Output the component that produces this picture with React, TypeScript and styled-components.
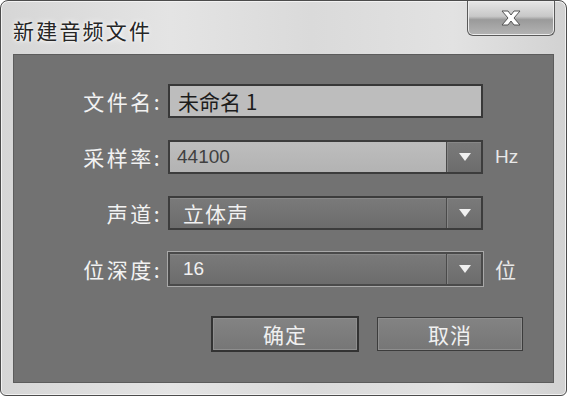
import styled, { createGlobalStyle, css } from "styled-components";

const GlobalStyle = createGlobalStyle`
  html, body {
    margin: 0;
    padding: 0;
    background: #ffffff;
  }
  * {
    box-sizing: border-box;
  }
`;

const cjk = `"Noto Sans CJK SC", "Noto Sans", sans-serif`;
const latin = `"Liberation Sans", "Noto Sans CJK SC", sans-serif`;

const Window = styled.div`
  width: 567px;
  height: 396px;
  display: flex;
  flex-direction: column;
  padding: 0 12px 12px 12px;
  border: 1px solid #4c4c4c;
  border-radius: 8px 8px 6px 6px;
  background: linear-gradient(90deg, #d6d6d6 0%, #e4e4e4 30%, #dadada 55%, #e2e2e2 80%, #d2d2d2 100%);
  box-shadow: inset 0 0 0 1px #f2f2f2;
`;

const TitleBar = styled.div`
  height: 53px;
  display: flex;
  justify-content: space-between;
  align-items: flex-start;
`;

const Title = styled.div`
  margin-top: 14px;
  font-family: ${cjk};
  font-size: 21px;
  letter-spacing: 2.2px;
  color: #262626;
  text-shadow: 0 0 6px #ffffff, 0 0 3px #ffffff;
`;

const CloseButton = styled.div`
  width: 88px;
  height: 35px;
  margin-right: -1px;
  display: flex;
  align-items: center;
  justify-content: center;
  border: 1px solid #5a5a5a;
  border-top: none;
  border-radius: 0 0 6px 6px;
  background: linear-gradient(180deg, #e6e6e6 0%, #c8c8c8 45%, #9a9a9a 55%, #b4b4b4 100%);
  box-shadow: inset 0 0 0 1px #ececec;
`;

const Client = styled.div`
  flex: 1;
  background: #727272;
  border: 1px solid #5c5c5c;
  display: grid;
  grid-template-columns: 148px 315px auto;
  grid-auto-rows: 34px;
  column-gap: 6px;
  row-gap: 22px;
  align-items: center;
  padding-top: 29px;
`;

const Label = styled.div`
  justify-self: end;
  font-family: ${cjk};
  font-size: 21px;
  letter-spacing: 2.5px;
  color: #f2f2f2;
  white-space: nowrap;
`;

const TextInput = styled.div`
  height: 34px;
  display: flex;
  align-items: center;
  padding-left: 8px;
  border: 2px solid #383838;
  background: #bdbdbd;
  font-family: ${cjk};
  font-size: 21px;
  color: #1c1c1c;
`;

const Select = styled.div<{ $focused?: boolean }>`
  height: 34px;
  display: flex;
  border: 2px solid #3c3c3c;
  background: linear-gradient(180deg, #7a7a7a 0%, #6c6c6c 100%);
  box-shadow: inset 0 1px 0 #888888;
  ${(p) =>
    p.$focused &&
    css`
      border-color: #4a4a4a;
      box-shadow: 0 0 0 1px #a8a8a8, inset 0 1px 0 #888888;
    `}
`;

const SelectValue = styled.div<{ $light?: boolean }>`
  flex: 1;
  display: flex;
  align-items: center;
  padding-left: 13px;
  font-family: ${latin};
  font-size: 19px;
  color: #f0f0f0;
  border-right: 1px solid #4a4a4a;
  ${(p) =>
    p.$light &&
    css`
      padding-left: 7px;
      background: linear-gradient(180deg, #bdbdbd 0%, #b3b3b3 100%);
      color: #404040;
    `}
`;

const CjkValue = styled.span`
  font-family: ${cjk};
  font-size: 21px;
  letter-spacing: 1px;
`;

const ArrowCell = styled.div`
  width: 34px;
  display: flex;
  align-items: center;
  justify-content: center;
  border-left: 1px solid #868686;
`;

const Unit = styled.div<{ $cjk?: boolean }>`
  margin-left: 6px;
  font-family: ${(p) => (p.$cjk ? cjk : latin)};
  font-size: ${(p) => (p.$cjk ? "21px" : "19px")};
  color: #e8e8e8;
`;

const ButtonRow = styled.div`
  grid-column: 2 / 4;
  display: flex;
  align-items: center;
  gap: 18px;
  padding-left: 43px;
  margin-top: 18px;
`;

const Button = styled.div<{ $default?: boolean }>`
  width: ${(p) => (p.$default ? "148px" : "146px")};
  height: ${(p) => (p.$default ? "36px" : "34px")};
  display: flex;
  align-items: center;
  justify-content: center;
  border: ${(p) => (p.$default ? "2px solid #333333" : "1px solid #3c3c3c")};
  background: linear-gradient(180deg, #838383 0%, #767676 100%);
  box-shadow: inset 0 0 0 1px #8e8e8e;
  font-family: ${cjk};
  font-size: 21px;
  letter-spacing: 1px;
  color: #f0f0f0;
`;

const Arrow = () => (
  <svg width="12" height="8" viewBox="0 0 12 8">
    <path d="M0 0 L12 0 L6 8 Z" fill="#f0f0f0" />
  </svg>
);

const CloseX = () => (
  <svg width="22" height="16" viewBox="0 0 22 16">
    <path
      d="M2 1 L8 1 L11 5 L14 1 L20 1 L14 8 L20 15 L14 15 L11 11 L8 15 L2 15 L8 8 Z"
      fill="#ffffff"
      stroke="#555555"
      strokeWidth="1"
      strokeLinejoin="round"
    />
  </svg>
);

export default function App() {
  return (
    <>
      <GlobalStyle />
      <Window>
        <TitleBar>
          <Title>新建音频文件</Title>
          <CloseButton>
            <CloseX />
          </CloseButton>
        </TitleBar>
        <Client>
          <Label>文件名:</Label>
          <TextInput>未命名 1</TextInput>
          <div />

          <Label>采样率:</Label>
          <Select>
            <SelectValue $light>44100</SelectValue>
            <ArrowCell>
              <Arrow />
            </ArrowCell>
          </Select>
          <Unit>Hz</Unit>

          <Label>声道:</Label>
          <Select>
            <SelectValue>
              <CjkValue>立体声</CjkValue>
            </SelectValue>
            <ArrowCell>
              <Arrow />
            </ArrowCell>
          </Select>
          <div />

          <Label>位深度:</Label>
          <Select $focused>
            <SelectValue>16</SelectValue>
            <ArrowCell>
              <Arrow />
            </ArrowCell>
          </Select>
          <Unit $cjk>位</Unit>

          <ButtonRow>
            <Button $default>确定</Button>
            <Button>取消</Button>
          </ButtonRow>
        </Client>
      </Window>
    </>
  );
}
